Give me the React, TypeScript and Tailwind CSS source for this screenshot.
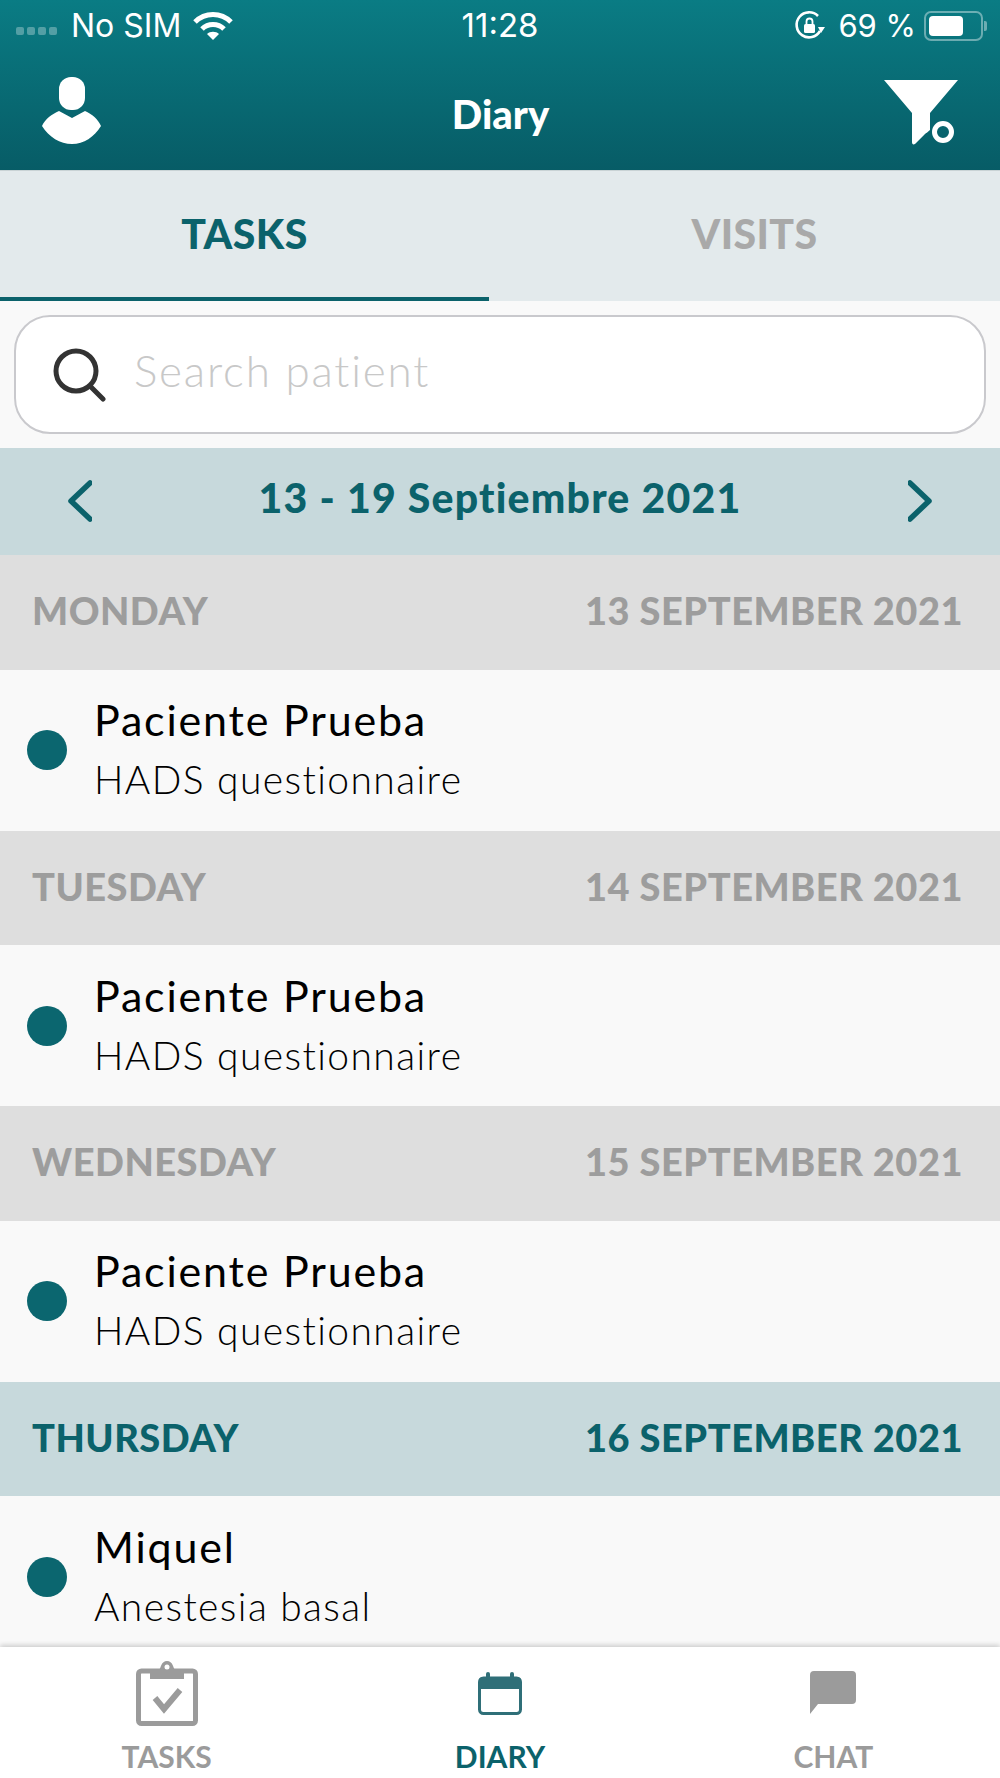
const sans = 'font-["Lato","Open_Sans",sans-serif]';

const days = [
  { day: 'MONDAY', date: '13 SEPTEMBER 2021', name: 'Paciente Prueba', task: 'HADS questionnaire' },
  { day: 'TUESDAY', date: '14 SEPTEMBER 2021', name: 'Paciente Prueba', task: 'HADS questionnaire' },
  { day: 'WEDNESDAY', date: '15 SEPTEMBER 2021', name: 'Paciente Prueba', task: 'HADS questionnaire' },
  { day: 'THURSDAY', date: '16 SEPTEMBER 2021', name: 'Miquel', task: 'Anestesia basal', active: true },
];

function StatusBar() {
  return (
    <div className='grid h-[52px] grid-cols-3 items-center pl-[16px] pr-[13px] font-["Inter",sans-serif] text-white'>
      <div className="flex items-center text-[32px]">
        <div className="mt-[10px] flex gap-[3px]">
          <span className="h-[8px] w-[8px] rounded-[2px] bg-white/30" />
          <span className="h-[8px] w-[8px] rounded-[2px] bg-white/30" />
          <span className="h-[8px] w-[8px] rounded-[2px] bg-white/30" />
          <span className="h-[8px] w-[8px] rounded-[2px] bg-white/30" />
        </div>
        <span className="ml-[14px] whitespace-nowrap">No SIM</span>
        <svg className="ml-[11px]" width="42" height="32" viewBox="0 0 42 32" fill="none" stroke="#fff" strokeWidth="5">
          <path d="M3 12 C13 2 29 2 39 12" />
          <path d="M10 19 C16 13 26 13 32 19" />
          <path d="M21 30 L15 24 C18 21 24 21 27 24 Z" fill="#fff" stroke="none" />
        </svg>
      </div>
      <div className="pr-[3px] text-center text-[33px]">11:28</div>
      <div className="flex items-center justify-end text-[31px]">
        <svg width="32" height="32" viewBox="0 0 32 32" fill="none">
          <path d="M26 21 A12.5 12.5 0 1 1 24 6" stroke="#fff" strokeWidth="2.6" />
          <path d="M24 17 L31 17 L27 23 Z" fill="#fff" />
          <rect x="10" y="14" width="11" height="9" rx="1.5" fill="#fff" />
          <path d="M12.5 14 V11.5 a3 3 0 0 1 6 0 V14" stroke="#fff" strokeWidth="1.8" />
        </svg>
        <span className="ml-[12px] whitespace-nowrap">69 %</span>
        <div className="ml-[8px] h-[30px] w-[59px] rounded-[7px] border-2 border-white/40 p-[3px]">
          <div className="h-full w-[34px] rounded-[4px] bg-white" />
        </div>
        <span className="ml-[1px] h-[10px] w-[3px] rounded-r-[2px] bg-white/40" />
      </div>
    </div>
  );
}

function Header() {
  return (
    <div className="h-[171px] border-b border-b-[#c9d3d5] bg-gradient-to-b from-[#0a7c84] to-[#075c66]">
      <StatusBar />
      <div className="flex h-[118px] items-center justify-between pl-[42px] pr-[41px] pt-[3px]">
        <div className="mb-[4px] w-[75px]">
          <svg width="60" height="68" viewBox="0 0 60 68" fill="#fff">
            <rect x="17" y="0" width="26" height="33" rx="12" />
            <path d="M17 34 L30 41 L43 34 C50 37 56 42 59 49 C52 60 42 67 30 67 C18 67 7 60 0 49 C3 42 10 37 17 34 Z" />
          </svg>
        </div>
        <span className={`${sans} mt-[3px] text-[40px] font-black text-white`}>Diary</span>
        <svg width="75" height="66" viewBox="0 0 75 66" fill="#fff">
          <path d="M0 0 H74 L46 33 V50 C44 52 42 53 41 54 L31 64 C29 65 28 64 28 62 V33 Z" />
          <circle cx="59" cy="52" r="8.5" fill="none" stroke="#fff" strokeWidth="5" />
        </svg>
      </div>
    </div>
  );
}

function Tabs() {
  return (
    <div className={`${sans} flex h-[130px] bg-[#e3eaec] text-[41px] font-black tracking-[0.4px]`}>
      <div className="flex w-[489px] items-center justify-center border-b-4 border-b-[#0b626b] text-[#0b626b]">
        TASKS
      </div>
      <div className="flex flex-1 items-center justify-center pb-[4px] pl-[20px] text-[#a9a9a9]">VISITS</div>
    </div>
  );
}

function SearchBox() {
  return (
    <div className="h-[147px] bg-[#f9f9f9] px-[14px] pt-[14px]">
      <div className="flex h-[119px] items-center rounded-[36px] border-2 border-[#c9c9cd] bg-white pl-[36px]">
        <svg width="54" height="54" viewBox="0 0 54 54" fill="none" stroke="#333" strokeWidth="5" strokeLinecap="round">
          <circle cx="24" cy="23" r="20" />
          <path d="M38 38 L51 51" />
        </svg>
        <span className={`${sans} mb-[9px] ml-[28px] text-[44px] font-light tracking-[1.8px] text-[#c8c8c8]`}>Search patient</span>
      </div>
    </div>
  );
}

function WeekBar() {
  return (
    <div className="flex h-[107px] items-center justify-between bg-[#c7d9dc] px-[68px]">
      <svg className="mb-[2px]" width="24" height="42" viewBox="0 0 24 42" fill="none" stroke="#0b626b" strokeWidth="5.5" strokeLinecap="round" strokeLinejoin="round">
        <path d="M22 3 L3 21 L22 39" />
      </svg>
      <span className={`${sans} mb-[8px] text-[41px] font-black tracking-[1.2px] text-[#0b626b]`}>13 - 19 Septiembre 2021</span>
      <svg className="mb-[2px]" width="24" height="42" viewBox="0 0 24 42" fill="none" stroke="#0b626b" strokeWidth="5.5" strokeLinecap="round" strokeLinejoin="round">
        <path d="M2 3 L21 21 L2 39" />
      </svg>
    </div>
  );
}

function DayList() {
  return (
    <div className={`${sans} min-h-0 flex-1 overflow-hidden`}>
      {days.map((d) => (
        <div key={d.date}>
          <div
            className={`flex h-[114.5px] items-center justify-between pb-[3px] pl-[32px] pr-[37px] text-[38px] font-black tracking-[0.5px] ${
              d.active ? 'bg-[#c7d9dc] text-[#0b626b]' : 'bg-[#dedede] text-[#9d9d9d]'
            }`}
          >
            <span>{d.day}</span>
            <span>{d.date}</span>
          </div>
          <div className="flex h-[161px] items-center gap-[27px] bg-[#f9f9f9] pl-[27px]">
            <span className="h-[40px] w-[40px] rounded-full bg-[#0b666f]" />
            <div className="text-black">
              <div className="text-[43px] leading-[58px] tracking-[1.8px]">{d.name}</div>
              <div className="text-[39px] font-light leading-[60px] tracking-[1.4px]">{d.task}</div>
            </div>
          </div>
        </div>
      ))}
    </div>
  );
}

function BottomBar() {
  return (
    <div className={`${sans} grid h-[131px] grid-cols-3 bg-white text-[30px] font-bold shadow-[0_-2px_5px_rgba(0,0,0,0.18)]`}>
      <div className="flex flex-col items-center text-[#9b9b9b]">
        <div className="flex h-[87px] items-start pt-[13px]">
          <svg width="62" height="66" viewBox="0 0 62 66" fill="none">
            <rect x="2.5" y="11" width="57" height="52.5" rx="3" stroke="#9b9b9b" strokeWidth="5" />
            <path d="M14 19 V10 H23 C25 8 25 1 31 1 C37 1 37 8 39 10 H48 V19 Z" fill="#9b9b9b" />
            <circle cx="31" cy="7" r="2.5" fill="#fff" />
            <path d="M19 38 L28 49 L44 30" stroke="#9b9b9b" strokeWidth="6" />
          </svg>
        </div>
        <span>TASKS</span>
      </div>
      <div className="flex flex-col items-center text-[#0b626b]">
        <div className="flex h-[87px] items-start pt-[25px]">
          <svg width="44" height="43" viewBox="0 0 44 43" fill="none">
            <rect x="1.5" y="6" width="41" height="35.5" rx="4" stroke="#2f6f78" strokeWidth="3" />
            <path d="M1 17 V9 a4 4 0 0 1 4 -4 H39 a4 4 0 0 1 4 4 V17 Z" fill="#2f6f78" />
            <rect x="8" y="0" width="4" height="8" rx="2" fill="#2f6f78" />
            <rect x="32" y="0" width="4" height="8" rx="2" fill="#2f6f78" />
          </svg>
        </div>
        <span>DIARY</span>
      </div>
      <div className="flex flex-col items-center text-[#9b9b9b]">
        <div className="flex h-[87px] items-start pt-[24px]">
          <svg width="46" height="43" viewBox="0 0 46 43" fill="#9b9b9b">
            <path d="M4 0 H42 a4 4 0 0 1 4 4 V29 a4 4 0 0 1 -4 4 H8 L0 43 V4 a4 4 0 0 1 4 -4 Z" />
          </svg>
        </div>
        <span>CHAT</span>
      </div>
    </div>
  );
}

export default function App() {
  return (
    <div className="flex h-[1778px] w-[1000px] flex-col overflow-hidden bg-white">
      <Header />
      <Tabs />
      <SearchBox />
      <WeekBar />
      <DayList />
      <BottomBar />
    </div>
  );
}
